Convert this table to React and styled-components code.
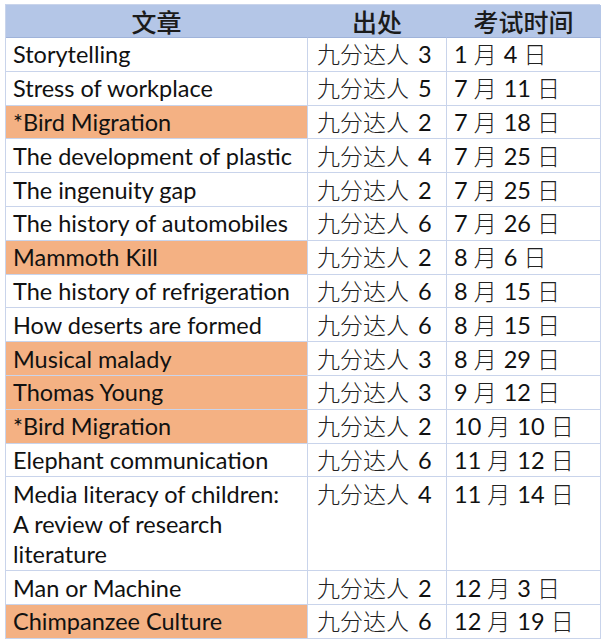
import { Fragment } from "react";
import styled, { createGlobalStyle } from "styled-components";

// -------------- GLOBAL --------------- //
const GlobalStyle = createGlobalStyle`
  html, body {
    margin: 0;
    padding: 0;
    background: #ffffff;
  }
`;

// -------------- STYLED COMPONENTS --------------- //
//? one text line is 30px, cells add ~3.8px of padding + border
const lineH = 30;

const Page = styled.div`
  padding: 4px 0 0 5px;
`;

const Sheet = styled.div`
  display: grid;
  grid-template-columns: 302px 139px 154px;
  width: 595px;
  border-top: 1px solid #c9d4eb;
  border-left: 1px solid #c9d4eb;
  box-sizing: border-box;
  font-family: "Lato", "Noto Sans CJK SC", sans-serif;
  color: #111;
`;

const HeadCell = styled.div`
  box-sizing: border-box;
  height: 33px;
  background: #b4c6e7;
  border-bottom: 1px solid #9fb3da;
  border-right: 1px solid #b4c6e7;
  display: flex;
  align-items: center;
  justify-content: center;
  font-family: "Noto Sans CJK SC", sans-serif;
  font-size: 25px;
  font-weight: 500;
  color: #1b1b1b;
`;

const Cell = styled.div`
  box-sizing: border-box;
  height: ${(p) => (p.$lines || 1) * lineH + 3.8}px;
  padding: 1.4px 4px 0 ${(p) => p.$padL || 7}px;
  line-height: ${lineH}px;
  font-size: 23.5px;
  border-right: 1px solid #c9d4eb;
  border-bottom: 1px solid #c9d4eb;
  background: ${(p) => (p.$hot ? "#f4b183" : "#ffffff")};
  white-space: pre-line;
`;

const Han = styled.span`
  font-family: "Noto Sans CJK SC", sans-serif;
  font-size: 23px;
  font-weight: 300;
  line-height: 1;
  color: #222;
  margin-right: ${(p) => p.$gap || 0}px;
`;

// -------------- DATA --------------- //
const rows = [
  ["Storytelling", 3, 1, 4, false],
  ["Stress of workplace", 5, 7, 11, false],
  ["*Bird Migration", 2, 7, 18, true],
  ["The development of plastic", 4, 7, 25, false],
  ["The ingenuity gap", 2, 7, 25, false],
  ["The history of automobiles", 6, 7, 26, false],
  ["Mammoth Kill", 2, 8, 6, true],
  ["The history of refrigeration", 6, 8, 15, false],
  ["How deserts are formed", 6, 8, 15, false],
  ["Musical malady", 3, 8, 29, true],
  ["Thomas Young", 3, 9, 12, true],
  ["*Bird Migration", 2, 10, 10, true],
  ["Elephant communication", 6, 11, 12, false],
  [
    "Media literacy of children:\nA review of research\nliterature",
    4,
    11,
    14,
    false,
  ],
  ["Man or Machine", 2, 12, 3, false],
  ["Chimpanzee Culture", 6, 12, 19, true],
];

export default function App() {
  return (
    <Page>
      <GlobalStyle />
      <Sheet>
        <HeadCell>文章</HeadCell>
        <HeadCell>出处</HeadCell>
        <HeadCell>考试时间</HeadCell>
        {rows.map(([title, n, month, day, hot], i) => {
          const lines = title.split("\n").length;
          return (
            <Fragment key={i}>
              <Cell $hot={hot} $lines={lines}>
                {title}
              </Cell>
              <Cell $padL={9} $lines={lines}>
                <Han $gap={3}>九分达人</Han> {n}
              </Cell>
              <Cell $padL={7} $lines={lines}>
                {month} <Han $gap={1}>月</Han> {day} <Han>日</Han>
              </Cell>
            </Fragment>
          );
        })}
      </Sheet>
    </Page>
  );
}
